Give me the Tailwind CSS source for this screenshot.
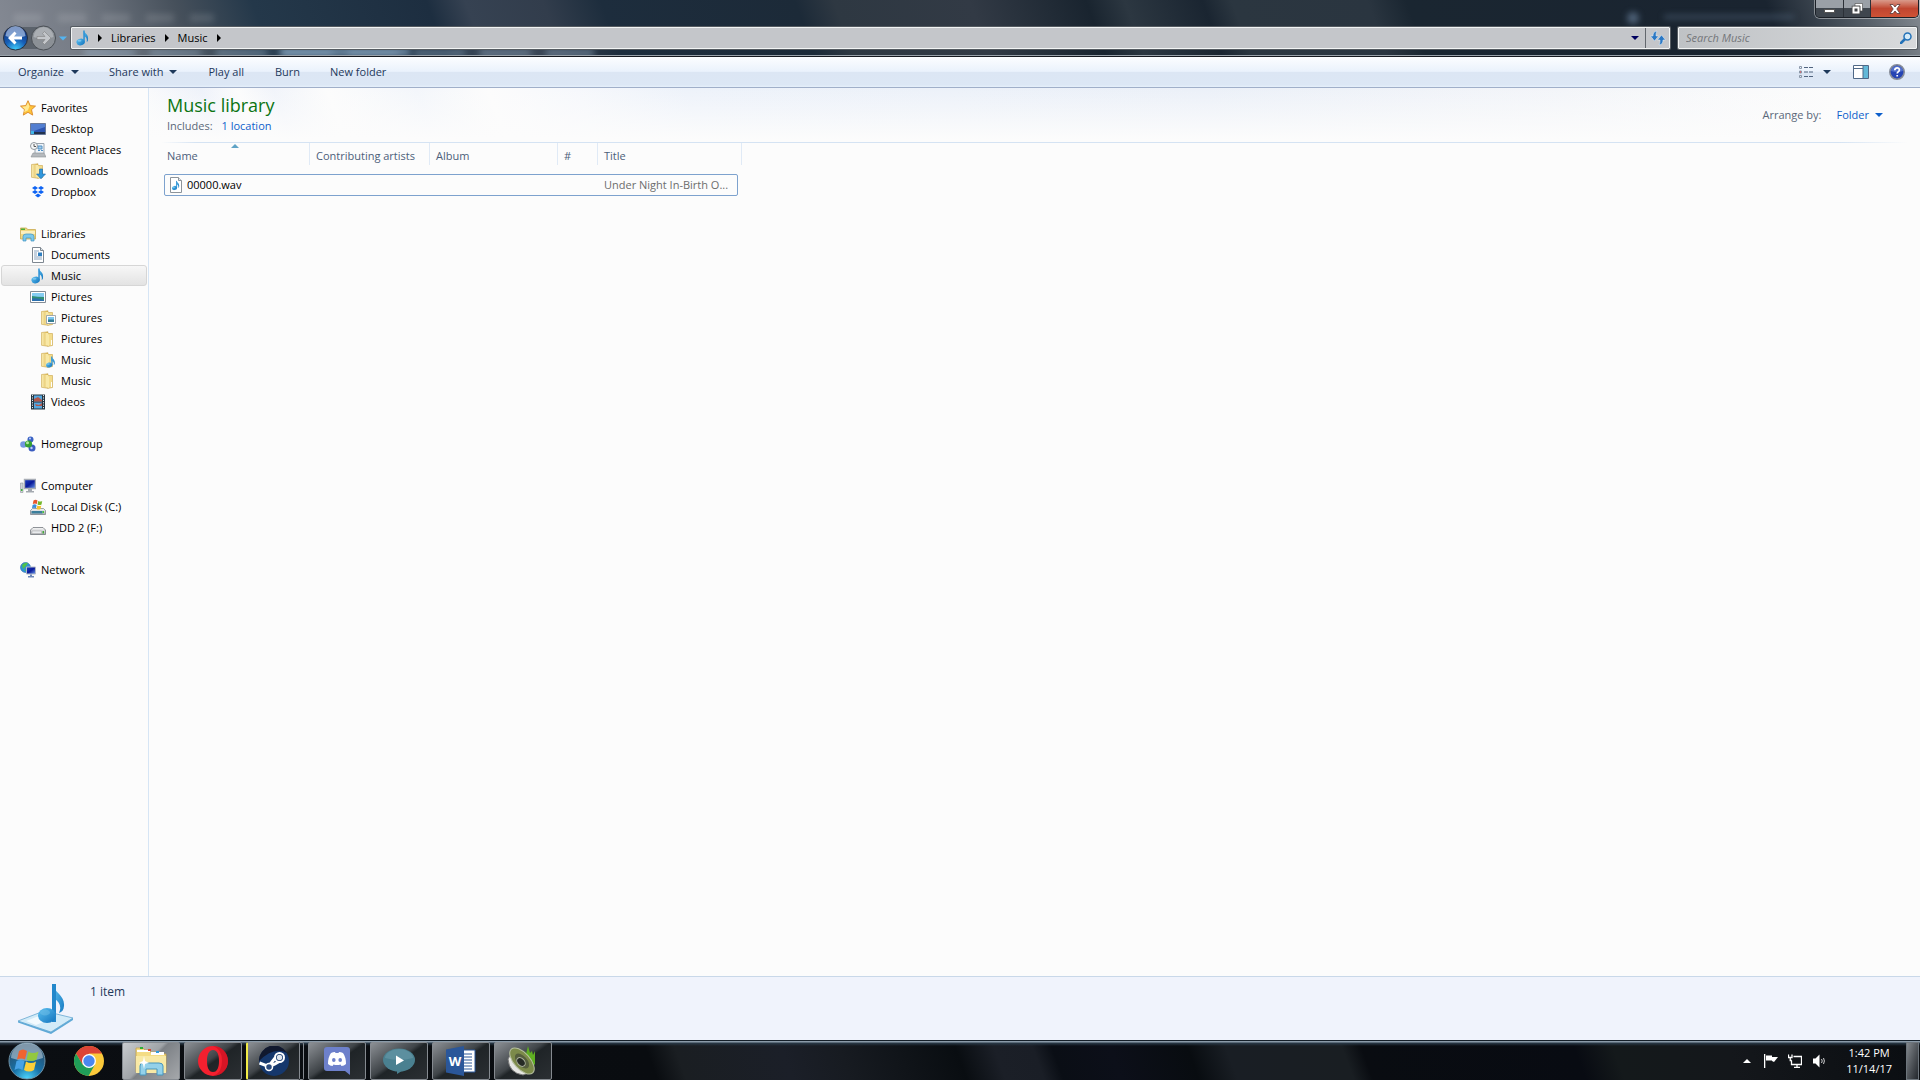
<!DOCTYPE html>
<html lang="en">
<head>
    <meta charset="UTF-8">
    <meta name="viewport" content="width=device-width, initial-scale=1.0">
    <title>Music</title>
    <script src="https://cdn.jsdelivr.net/npm/@tailwindcss/browser@4"></script>
</head>
<body class="h-screen flex flex-col overflow-hidden bg-[#fcfcfc] font-['Open_Sans',sans-serif] text-[11px] leading-4 text-black">
    <!-- shared icons -->
    <svg class="absolute size-0" aria-hidden="true">
        <defs>
            <linearGradient id="blue" x1="0" y1="0" x2="1" y2="1"><stop offset="0" stop-color="#5cc0f0"/><stop offset="1" stop-color="#1173bd"/></linearGradient>
            <linearGradient id="gold" x1="0" y1="0" x2="1" y2="0"><stop offset="0" stop-color="#fbeeb4"/><stop offset="1" stop-color="#dcb650"/></linearGradient>
            <linearGradient id="screen" x1="0" y1="0" x2="1" y2="1"><stop offset="0" stop-color="#1c3fc4"/><stop offset=".5" stop-color="#0a1a9a"/><stop offset="1" stop-color="#6fa0f0"/></linearGradient>
            <linearGradient id="metal" x1="0" y1="0" x2="0" y2="1"><stop offset="0" stop-color="#fafafa"/><stop offset="1" stop-color="#a9adb2"/></linearGradient>
        </defs>
        <symbol id="note" viewBox="0 0 16 16">
            <path d="M8.500.500c.5 2.500 5.500 3.500 4.500 9.500-.1.900-.7 1.700-1.300 2 .6-3-.5-4.800-2-5.500v6z" fill="url(#blue)"/>
            <path d="M8.300.500h1.400v12H8.300z" fill="#2a8fd4"/>
            <ellipse cx="5.600" cy="12" rx="4.200" ry="3.300" transform="rotate(-12 5.600 12)" fill="url(#blue)"/>
            <ellipse cx="4.500" cy="10.800" rx="2" ry="1" fill="#9fd8f5" opacity=".6"/>
        </symbol>
        <symbol id="folder" viewBox="0 0 16 16">
            <path d="M1.500 1.500 8 .800v14.500l-6.500-1z" fill="url(#gold)" stroke="#c9a448" stroke-width=".6"/>
            <path d="M8 2.500h4.500v12L8 15.300z" fill="#f3dc8b" stroke="#c9a448" stroke-width=".6"/>
            <path d="M5.500 2h2.500l1 2v11l-3.500-.7z" fill="#f8e8a6"/>
            <path d="M11 9h1v5h-1z" fill="#fff"/>
        </symbol>
        <symbol id="caret" viewBox="0 0 8 4"><path d="M0 0h8L4 4z" fill="currentColor"/></symbol>
        <symbol id="crumb" viewBox="0 0 4 8"><path d="M0 0v8l4-4z" fill="currentColor"/></symbol>
    </svg>

    <!-- title bar and address bar -->
    <header class="relative h-[57px] shrink-0 overflow-hidden border-b border-[#15181f] bg-[linear-gradient(70deg,#858a94_0%,#747a84_5%,#46505b_10%,#24384a_14%,#1d2e40_23%,#364252_25%,#323d4c_29%,#1d2d3d_32%,#1c2a38_42%,#2e3842_44%,#323a45_51%,#19242f_57%,#2c3741_59%,#1a2531_63%,#2b3640_64.5%,#2a3540_71.5%,#1a2631_73.500%,#1a2430_92%,#58616a_97%,#858b92_100%)]">
        <!-- window behind the glass -->
        <div class="absolute inset-0 blur-[3px]" aria-hidden="true">
            <div class="absolute left-[14px] top-[14px] h-2 w-[200px] bg-[repeating-linear-gradient(90deg,#ffffff20_0_28px,transparent_28px_44px)]"></div>
            <div class="absolute left-[84px] top-[49px] h-2 w-[510px] bg-[repeating-linear-gradient(90deg,#a9c4dc66_0_48px,#a9c4dc11_54px_66px)]"></div>
            <div class="absolute left-[280px] top-[48px] h-2 w-[130px] bg-[#9fc0de]/60"></div>
            <div class="absolute left-[1627px] top-[12px] size-3 rounded-full bg-[#6f89a5]/60"></div>
            <div class="absolute left-[1664px] top-[15px] h-1 w-[130px] bg-[#5d7389]/50"></div>
        </div>
        <div class="relative flex h-[26px] items-start justify-end pr-px">
            <div class="flex h-[18px] overflow-hidden rounded-b-[5px] border border-t-0 border-[#1b2027] shadow-[0_0_0_1px_#ffffff66]">
                <button class="flex w-7 items-end justify-center border-r border-[#2b3037] bg-linear-to-b from-[#9aa0a7] from-45% to-[#3f464e] to-50% pb-1" aria-label="Minimize"><span class="h-1 w-[11px] border border-[#555] bg-white"></span></button>
                <button class="flex w-[27px] items-center justify-center border-r border-[#2b3037] bg-linear-to-b from-[#9aa0a7] from-45% to-[#3f464e] to-50%" aria-label="Restore">
                    <svg class="size-3" viewBox="0 0 12 12" fill="none"><path d="M4 .500h7.500V8H9V3H4z" fill="#fff" stroke="#444" stroke-width=".6"/><path d="M2.500 4.500h5v5h-5z" stroke="#444" stroke-width="3.500"/><path d="M2.500 4.500h5v5h-5z" stroke="#fff" stroke-width="2"/></svg>
                </button>
                <button class="flex w-[47px] items-center justify-center bg-linear-to-b from-[#d99a8b] via-[#c04630] via-50% to-[#cf5235]" aria-label="Close">
                    <svg class="h-[10px] w-3" viewBox="0 0 12 10"><path d="m1 .500h3l2 2.500 2-2.500h3L7.800 5 11 9.500H8L6 7 4 9.500H1L4.200 5z" fill="#fff" stroke="#5a3a3a" stroke-width=".8"/></svg>
                </button>
            </div>
        </div>
        <div class="relative flex h-6 items-center gap-[3px] pl-[3px] pr-[2px]">
            <nav class="flex shrink-0 items-center" aria-label="History">
                <svg class="h-[26px] w-14" viewBox="0 0 56 26">
                    <defs>
                        <radialGradient id="back" cx=".5" cy="1" r=".9"><stop offset="0" stop-color="#42d2ff"/><stop offset=".5" stop-color="#1760b8"/><stop offset="1" stop-color="#15347e"/></radialGradient>
                    </defs>
                    <path d="M12 2h32v22H12z" fill="#5b626b"/>
                    <circle cx="12.500" cy="13" r="12" fill="url(#back)" stroke="#27303d"/>
                    <path d="M2.500 11a10 10 0 0 1 20 0q-10 4-20 0z" fill="#b8cfee" opacity=".65"/>
                    <path d="m5 13 6.500-6.500 2 2-2.500 3h8v3h-8l2.500 3-2 2z" fill="#fff"/>
                    <circle cx="40.500" cy="13" r="12" fill="#8b9096" stroke="#4a4f55"/>
                    <path d="M30.500 12a10 10 0 0 1 20 0q-10 4-20 0z" fill="#c9ccd0" opacity=".5"/>
                    <path d="m48 13-6.500-6.500-2 2 2.500 3h-8v3h8l-2.500 3 2 2z" fill="#c3c6ca" stroke="#777" stroke-width=".5"/>
                </svg>
                <button class="text-[#55b4f0]" aria-label="Recent pages"><svg class="h-[5px] w-2"><use href="#caret"/></svg></button>
            </nav>
            <div class="flex h-6 flex-1 items-center rounded-xs border-2 border-[#555b61] bg-[#c4c6ca] outline-1 -outline-offset-2 outline-[#f2f4f4]">
                <svg class="ml-[3px] size-4"><use href="#note"/></svg>
                <div class="flex flex-1 items-center gap-[9px] pl-[7px]">
                    <svg class="h-2 w-1"><use href="#crumb"/></svg>
                    <a href="#">Libraries</a>
                    <svg class="h-2 w-1"><use href="#crumb"/></svg>
                    <a href="#">Music</a>
                    <svg class="h-2 w-1"><use href="#crumb"/></svg>
                </div>
                <button class="px-[6px] text-[#000060]" aria-label="Previous locations"><svg class="h-1 w-2"><use href="#caret"/></svg></button>
                <button class="flex h-5 w-6 items-center justify-center border-l border-[#62676d]" aria-label="Refresh">
                    <svg class="size-4" viewBox="0 0 16 16" fill="#2b78c4" stroke="#e8f2fb" stroke-width=".5"><path d="M7 1C4 1.500 3 3 3 6H.500l4 5 4-5H6c0-2 0-3 1-5z"/><path d="M9 15c3-.5 4-2 4-5h2.500l-4-5-4 5H10c0 2 0 3-1 5z"/></svg>
                </button>
            </div>
            <div class="ml-[3px] flex h-6 w-[241px] items-center rounded-xs border-2 border-[#555b61] bg-linear-to-r from-[#bfc2c5] to-[#d8dadc] pl-[7px] pr-1 outline-1 -outline-offset-2 outline-[#f2f4f4]">
                <input type="text" class="w-full flex-1 bg-transparent italic outline-none placeholder:text-[#74767a]" placeholder="Search Music" aria-label="Search Music">
                <svg class="size-3" viewBox="0 0 12 12" fill="none" stroke="#2472b8"><path d="m1 11 4-4" stroke-width="2.500" stroke-linecap="round"/><circle cx="7.500" cy="4.500" r="3.500" stroke-width="1.500" fill="#d5ebf8"/></svg>
            </div>
        </div>
        <div class="absolute inset-x-0 bottom-0 h-px bg-[#9aa2aa]"></div>
    </header>

    <!-- command bar -->
    <div class="flex h-[31px] shrink-0 items-center border-b border-[#a0afc9] bg-[linear-gradient(#fcfdff,#eaf2fc_48%,#dce6f4_50%,#dce7f5_92%,#e5effa)] pl-[18px] pr-[15px] text-[#1e395b]">
        <button class="mr-[30px] flex items-center gap-[7px]">Organize <svg class="h-1 w-2"><use href="#caret"/></svg></button>
        <button class="mr-[31px] flex items-center gap-[6px]">Share with <svg class="h-1 w-2"><use href="#caret"/></svg></button>
        <button class="mr-[31px]">Play all</button>
        <button class="mr-[30px]">Burn</button>
        <button>New folder</button>
        <div class="ml-auto flex items-center">
            <button aria-label="Change your view">
                <svg class="block h-[14px] w-4" viewBox="0 0 16 14" fill="none"><path d="M1.500 1.500h2v2h-2zM1.500 6h2v2h-2zM1.500 10.500h2v2h-2z" stroke="#8a97a8"/><path d="M2 6.500h1v1H2z" fill="#d22"/><path d="M6 2.500h10M6 7h10M6 11.500h10" stroke="#51647f" stroke-dasharray="4 1"/></svg>
            </button>
            <button class="ml-[9px]" aria-label="More options"><svg class="h-1 w-2"><use href="#caret"/></svg></button>
            <button class="ml-[22px]" aria-label="Show the preview pane">
                <svg class="block h-[14px] w-4" viewBox="0 0 16 14"><path d="M.500.500h15v13H.500z" fill="#fff" stroke="#4f6887"/><path d="M10 1h5v12h-5z" fill="#62b8d8"/><path d="M1 3.500h9M10 1v12" stroke="#4f6887"/></svg>
            </button>
            <button class="ml-5" aria-label="Get help">
                <svg class="block size-4" viewBox="0 0 16 16"><circle cx="8" cy="8" r="7.200" fill="#2544b4" stroke="#868c98" stroke-width="1.600"/><path d="M2 7a6 5 0 0 1 12 0q-6 2-12 0z" fill="#7f9be6" opacity=".5"/><path d="M5.800 6.200c0-3.200 4.700-3 4.600-.2 0 1.700-2.200 1.600-2.200 3.600M8.200 11v1.600" fill="none" stroke="#fff" stroke-width="1.700"/></svg>
            </button>
        </div>
    </div>

    <div class="flex min-h-0 flex-1">
        <!-- navigation pane -->
        <nav class="w-[149px] shrink-0 border-r border-[#d6e5f5] pt-[9px] [&_a]:mx-px [&_a]:flex [&_a]:h-[21px] [&_a]:items-center [&_a]:gap-[5px] [&_svg]:size-4 [&_svg]:shrink-0" aria-label="Folders">
            <ul class="mb-[21px]">
                <li><a href="#" class="pl-[19px]"><svg viewBox="0 0 16 16"><path d="m8 .700 2.200 4.900 5.300.500-4 3.600 1.200 5.400L8 12.300l-4.700 2.800 1.200-5.400-4-3.600 5.300-.5z" fill="#ffc53a" stroke="#d98728" stroke-width=".9"/><path d="m8 2.500 1.500 3.800-1.500 4-4 2 1-3-3-2.500 4-.5z" fill="#ffe993"/></svg>Favorites</a></li>
                <li><a href="#" class="pl-[29px]"><svg viewBox="0 0 16 16"><path d="M.500 2.500h15v11H.500z" fill="#2c54b0" stroke="#6a7a98"/><path d="M1 3h14v3L1 11z" fill="#6c9be6" opacity=".6"/><path d="M1 11h14v2H1z" fill="#22324e"/><path d="M1 10h3v3H1z" fill="#3fb5e8"/></svg>Desktop</a></li>
                <li><a href="#" class="pl-[29px]"><svg viewBox="0 0 16 16"><path d="M5 1.500h9v10H5z" fill="#eef4fa" stroke="#9aa4ae"/><path d="M8 4h4v3H8zM8 8.500h2M11 8.500h2" stroke="#5090c4" fill="#a4cdea"/><path d="m3 11h11l2 4H1z" fill="#b5b9bd" stroke="#8b9095" stroke-width=".6"/><circle cx="4" cy="4" r="3.500" fill="#f5f7f8" stroke="#92999f"/><path d="M4 2v2.500h2" fill="none" stroke="#555"/></svg>Recent Places</a></li>
                <li><a href="#" class="pl-[29px]"><svg viewBox="0 0 16 16"><use href="#folder"/><path d="M9.500 6h3v5h3L11 15.800 6.500 11h3z" fill="#2f97dd" stroke="#1766a8" stroke-width=".6"/></svg>Downloads</a></li>
                <li><a href="#" class="pl-[29px]"><svg viewBox="0 0 16 16" fill="#0d63f3"><path d="m5 2 3 2-3 2-3-2zM11 2l3 2-3 2-3-2zM5 6l3 2-3 2-3-2zM11 6l3 2-3 2-3-2zM8 9.500l3 2-3 2-3-2z"/></svg>Dropbox</a></li>
            </ul>
            <ul class="mb-[21px]">
                <li><a href="#" class="pl-[19px]"><svg viewBox="0 0 16 16"><path d="M.500 2h6l1 1.500h8V13H.500z" fill="#f2d983" stroke="#c9a94f" stroke-width=".8"/><path d="M1 2.500h4V4H1z" fill="#4cad3a"/><path d="M1 5h14v3H1z" fill="#fbefbd"/><path d="M3 15V10.500Q3 8 6 8h5q3 0 3 2.500V15h-3v-3H6v3z" fill="#7cc8ea" stroke="#3f94c2" stroke-width=".7"/></svg>Libraries</a></li>
                <li><a href="#" class="pl-[29px]"><svg viewBox="0 0 16 16"><path d="M2.500.500h8l3 3v12h-11z" fill="#fff" stroke="#7e8790"/><path d="M10.500.500v3h3" fill="#dde3e8" stroke="#7e8790"/><path d="M4 4h5M4 6h3M4 8h3M4 10h8M4 12h8" stroke="#8aa3bd"/><path d="M8 5.500h4V9H8z" fill="#2f7fc0"/></svg>Documents</a></li>
                <li><a href="#" aria-current="page" class="rounded-[3px] border border-[#d6d6d6] bg-linear-to-b from-[#f7f7f7] to-[#e3e3e3] pl-7"><svg><use href="#note"/></svg>Music</a></li>
                <li><a href="#" class="pl-[29px]"><svg viewBox="0 0 16 16"><path d="M.500 2.500h15v11H.500z" fill="#fff" stroke="#828c96"/><path d="M2 4h12v5H2z" fill="#85cdf2"/><path d="M2 7q5 1 12 1v4H2z" fill="#2f8f76"/><path d="M2 9.500q6-1 12 1.500v1H2z" fill="#2a6fae"/></svg>Pictures</a></li>
                <li><a href="#" class="pl-[39px]"><svg viewBox="0 0 16 16"><use href="#folder"/><path d="M6.500 5.500h9v8h-9z" fill="#fff" stroke="#8c969f" stroke-width=".8"/><path d="M8 7h6v3H8z" fill="#7cc5ee"/><path d="M8 9.500h6V12H8z" fill="#357d95"/></svg>Pictures</a></li>
                <li><a href="#" class="pl-[39px]"><svg><use href="#folder"/></svg>Pictures</a></li>
                <li><a href="#" class="pl-[39px]"><svg viewBox="0 0 16 16"><use href="#folder"/><use href="#note" x="5" y="4" width="12" height="12"/></svg>Music</a></li>
                <li><a href="#" class="pl-[39px]"><svg><use href="#folder"/></svg>Music</a></li>
                <li><a href="#" class="pl-[29px]"><svg viewBox="0 0 16 16"><path d="M1 .500h14v15H1z" fill="#26343f"/><path d="M4 1.500h8v6H4zM4 8.500h8v6H4z" fill="#56a8e0"/><path d="m4 5 4-2 4 3v1.500H4zM5 10l4 1 3-2v3H6z" fill="#b3574a"/><path d="M2.500 1v14M13.500 1v14" stroke="#dfe8ee" stroke-dasharray="1.200 1.200"/></svg>Videos</a></li>
            </ul>
            <ul class="mb-[21px]">
                <li><a href="#" class="pl-[19px]"><svg viewBox="0 0 16 16"><circle cx="10.500" cy="3.500" r="3" fill="#3a62c4"/><circle cx="3.500" cy="8.500" r="3.300" fill="#7395e0"/><circle cx="12" cy="12" r="3.500" fill="#3a5cc0"/><circle cx="8.500" cy="8" r="3.600" fill="#35a033"/><circle cx="7.500" cy="6.800" r="1.500" fill="#b2e8a0"/><circle cx="10" cy="2.500" r="1" fill="#c2d4fa"/><circle cx="11.500" cy="12" r="1.200" fill="#b9cdf8"/></svg>Homegroup</a></li>
            </ul>
            <ul class="mb-[21px]">
                <li><a href="#" class="pl-[19px]"><svg viewBox="0 0 16 16"><path d="M4.500 1.500h11v9h-11z" fill="url(#screen)" stroke="#a7acb5" stroke-width="1.400"/><path d="M8 11h4v2h2v1.500H6V13h2z" fill="#a4a9b0"/><path d="M.500 5h2.500v9.500H.500z" fill="#cfd3d8" stroke="#8f959c" stroke-width=".6"/><path d="M1 11h1.500v2H1z" fill="#3db53a"/></svg>Computer</a></li>
                <li><a href="#" class="pl-[29px]"><svg viewBox="0 0 16 16"><path d="m2.500 9.500h11l2 2v4H.500v-4z" fill="url(#metal)" stroke="#777d84" stroke-width=".7"/><path d="M1.500 12h11v2.500h-11z" fill="#3c7f9c"/><path d="M12.500 12H14v2h-1.500z" fill="#47c43b"/><path d="M3.500 1.500q2-1.500 4 0l-.7 3.500q-2-1-4 0z" fill="#e8562c"/><path d="M8.200 2q2 1 4 0l-.7 3.500q-2 1-4 0z" fill="#74b72b"/><path d="M2.600 6q2-1.500 4 0L6 9.300q-2-1-4 0z" fill="#3b8fdc"/><path d="M7.300 6.500q2 1 4 0L10.500 10q-2 1-4 0z" fill="#f8c22d"/></svg>Local Disk (C:)</a></li>
                <li><a href="#" class="pl-[29px]"><svg viewBox="0 0 16 16"><path d="M3 7.500h10l2.500 2.500v4.500H.500V10z" fill="url(#metal)" stroke="#74797f" stroke-width=".8"/><path d="M2 11h9.500v2.500H2z" fill="#e9ebee" stroke="#999" stroke-width=".4"/><path d="M12.500 11H14v2.500h-1.500z" fill="#47a93b"/></svg>HDD 2 (F:)</a></li>
            </ul>
            <ul>
                <li><a href="#" class="pl-[19px]"><svg viewBox="0 0 16 16"><circle cx="5.500" cy="5.500" r="5" fill="#2f90d8" stroke="#2a6ba6" stroke-width=".6"/><path d="M2 3q3-3 6-2L6 4 3 7zM4 8l3-1 1 3z" fill="#4fc24c"/><path d="M6.500 5h9v7h-9z" fill="url(#screen)" stroke="#b3bac6"/><path d="M10 12.500h2V14h2v1.500H8V14h2z" fill="#6c87b8"/></svg>Network</a></li>
            </ul>
        </nav>

        <!-- library contents -->
        <main class="min-w-0 flex-1 pl-3">
            <div class="-ml-3 flex h-[54px] justify-between bg-[linear-gradient(#fcfcfc00,#fcfcfc_95%),linear-gradient(70deg,#fcfcfc_0%,#eef2fa_4%,#fcfcfc_6%,#f1f4fa_8%,#fcfcfc_11%,#f3f6fb_16%,#fcfcfc_20%,#f6f8fc_25%,#edf2fa_31%,#ebf0f8_60%,#f3f5f9_80%,#fcfcfc_95%)] pl-[18px] pr-[37px]">
                <div class="pt-[5px]">
                    <h1 class="mb-px text-[18px] leading-6 text-[#0b7412]">Music library</h1>
                    <p class="text-[#5a6779]">Includes: <a href="#" class="ml-[6px] text-[#0d5fcb]">1 location</a></p>
                </div>
                <div class="flex items-center gap-[15px] text-[#5a6779]">
                    <span>Arrange by:</span>
                    <button class="flex items-center gap-[6px] text-[#0d5fcb]">Folder <svg class="h-1 w-2"><use href="#caret"/></svg></button>
                </div>
            </div>
            <div class="mr-3 h-px bg-[linear-gradient(90deg,#fcfcfc,#d5e3f3_2%,#d5e3f3_96%,#fcfcfc)]"></div>
            <table class="ml-[3px] w-[578px] table-fixed border-collapse text-left [&_th]:p-0 [&_th]:font-normal [&_th]:text-[#4c607a]">
                <thead>
                    <tr>
                        <th class="relative w-[146px]">
                            <svg class="absolute left-[67px] top-px h-1 w-2" viewBox="0 0 8 4"><path d="m0 4 4-4 4 4z" fill="#5fa3c6"/></svg>
                            <div class="border-r border-[#e0eaf6] pt-[5px] pb-px pl-[3px]">Name</div>
                        </th>
                        <th class="w-[120px]"><div class="border-r border-[#e0eaf6] pt-[5px] pb-px pl-[6px]">Contributing artists</div></th>
                        <th class="w-[128px]"><div class="border-r border-[#e0eaf6] pt-[5px] pb-px pl-[6px]">Album</div></th>
                        <th class="w-10"><div class="border-r border-[#e0eaf6] pt-[5px] pb-px pl-[6px]">#</div></th>
                        <th class="w-[144px]"><div class="border-r border-[#e0eaf6] pt-[5px] pb-px pl-[6px]">Title</div></th>
                    </tr>
                    <tr class="h-[9px]"></tr>
                </thead>
                <tbody>
                    <tr class="h-[22px]">
                        <!-- focus frame spans the whole row -->
                        <td class="relative p-0 pl-1 after:absolute after:inset-y-0 after:left-0 after:w-[574px] after:rounded-xs after:border after:border-[#7da2ce]">
                            <div class="flex items-center gap-[3px]">
                                <svg class="size-4" viewBox="0 0 16 16"><path d="M2.500.500h8l3 3v12h-11z" fill="#fff" stroke="#8d949b"/><path d="M10.500.500v3h3" fill="#e4e8ec" stroke="#8d949b"/><use href="#note" x="3" y="3.500" width="10" height="10"/></svg>
                                00000.wav
                            </div>
                        </td>
                        <td></td>
                        <td></td>
                        <td></td>
                        <td class="p-0 pl-[6px] whitespace-nowrap text-[#6d6d6d]">Under Night In-Birth O...</td>
                    </tr>
                </tbody>
            </table>
        </main>
    </div>

    <!-- details pane -->
    <section class="flex h-16 shrink-0 gap-4 border-t border-[#c9d8e9] bg-[#f0f3fc] pl-[18px] pt-[7px] text-[12px] text-[#1e395b]" aria-label="Details">
        <svg class="h-[50px] w-14 shrink-0" viewBox="0 0 56 50">
            <path d="m0 37 26-10 29 7-22 14z" fill="#d2ebf8" stroke="#7fb6d9"/>
            <path d="m0 37 33 11 22-14v2L33 50 0 38.500z" fill="#5fa9d6"/>
            <path d="m8 37 18-7 12 3-20 8z" fill="#f2fafe"/>
            <path d="M35 0c1 9 12 11 11 22-.3 4-2 6-5 7 3-7 0-11-4-14v22h-2z" fill="url(#blue)"/>
            <path d="M34 0h4v38h-4z" fill="#2287cb"/>
            <ellipse cx="29" cy="31.500" rx="9" ry="7.500" fill="url(#blue)"/>
            <ellipse cx="27" cy="28.500" rx="5" ry="3" fill="#72bfe8" opacity=".5"/>
        </svg>
        <p>1 item</p>
    </section>

    <!-- taskbar -->
    <footer class="flex h-10 shrink-0 items-stretch border-t border-[#15202a] bg-[linear-gradient(#8a9aa8_0_1px,#2a3a48_2px,#ffffff00_5px),linear-gradient(70deg,#0b0e12_0%,#090c10_34%,#1a1e22_35.500%,#1b1f28_41%,#171b21_44%,#090d11_50%,#1b1f27_52%,#1a1e26_54%,#0a0e15_55%,#0c0f19_58%,#080c10_62%,#191e24_64%,#191e22_70%,#090c11_71%,#080b12_82%,#14191b_84%,#14171b_90%,#0a0d11_100%)] text-white">
        <button class="ml-2 mr-[26px] w-[38px]" aria-label="Start">
            <svg class="block h-[38px] w-[38px]" viewBox="0 0 38 38">
                <defs>
                    <radialGradient id="orb" cx=".5" cy="1" r=".9"><stop offset="0" stop-color="#4fd8ff"/><stop offset=".45" stop-color="#1872a8"/><stop offset="1" stop-color="#294d6b"/></radialGradient>
                </defs>
                <circle cx="19" cy="19" r="18" fill="url(#orb)" stroke="#6f93a8"/>
                <path d="M3 16a16 15 0 0 1 32 0q-16 6-32 0z" fill="#d5e4ec" opacity=".5"/>
                <path d="M11 9q4-3 8 0l-2 8.500q-4-2-8 0z" fill="#ef6430"/>
                <path d="M20.500 9.500q4 3 10 0l-2 8q-5 3-10 0z" fill="#93c83e"/>
                <path d="M8.500 19q4-2 8 0l-2 9q-4-3-8 0z" fill="#47a2e6"/>
                <path d="M18 19.500q5 3 10 0l-2 8.500q-5 3-10 0z" fill="#fccf39"/>
            </svg>
        </button>
        <button class="mr-4 flex w-[34px] items-center justify-center" aria-label="Google Chrome">
            <svg class="size-[30px]" viewBox="0 0 30 30"><circle cx="15" cy="15" r="15" fill="#fbc93a"/><path d="M2 7.500A15 15 0 0 1 28 7.500H15l-6.500 11z" fill="#dc4437"/><path d="M2 7.500A15 15 0 0 0 14.500 30l6.500-11.500H8.500z" fill="#1f9d58"/><circle cx="15" cy="15" r="7" fill="#fff"/><circle cx="15" cy="15" r="5.700" fill="#4a87f1"/></svg>
        </button>
        <div class="flex gap-1 pt-px [&>button]:flex [&>button]:h-[38px] [&>button]:w-[58px] [&>button]:items-center [&>button]:justify-center [&>button]:rounded-xs [&>button]:border [&>button]:border-[#858a90]">
            <button class="bg-[linear-gradient(135deg,#c9cccf,#a0a4a8_45%,#7d8186_50%,#a5a8ab)]" aria-label="Windows Explorer">
                <svg class="h-[30px] w-8" viewBox="0 0 32 30"><path d="M1 2h7l2 2h4l1 2h7l1 2h8v18H1z" fill="#f4dc84" stroke="#c4a149" stroke-width=".8"/><path d="M2 4h13v2H2zM16 6h13v3H16z" fill="#fff"/><path d="M5 1h3v2H5z" fill="#2cae38"/><path d="M13 3h3v2h-3z" fill="#d84630"/><path d="M21 5h3v2h-3z" fill="#2f9bdb"/><path d="M1 10h30v17H1z" fill="#f8e9a5"/><path d="M5 29V20q0-3 3-3h16q4 0 4 3v9h-6v-6H11v6z" fill="#93d1ea" stroke="#4796bd"/><path d="m9 10 1 5 4 2-4 1-1 5-1-5-4-1 4-2z" fill="#fff"/></svg>
            </button>
            <button class="bg-[linear-gradient(145deg,#8c9095,#3f4448_45%,#1f2427_52%,#2b2f33)]" aria-label="Opera">
                <svg class="size-[30px]" viewBox="0 0 30 30"><path fill-rule="evenodd" d="M15 0a15 15 0 1 0 0 30 15 15 0 0 0 0-30zm0 4c4.500 0 6 5 6 11s-1.500 11-6 11-6-5-6-11 1.500-11 6-11z" fill="#f3202f"/><path d="M15 0q14 1 15 15-1 14-15 15 9-3 9-15T15 0z" fill="#b90a1c" opacity=".5"/></svg>
            </button>
            <div class="flex h-[38px] w-[58px]">
                <button class="flex w-[54px] items-center justify-center rounded-xs border border-l-2 border-[#858a90] border-l-[#f2ec46] bg-[linear-gradient(145deg,#8c9095,#3f4448_45%,#1f2427_52%,#2b2f33)]" aria-label="Steam">
                    <svg class="size-[30px]" viewBox="0 0 30 30"><circle cx="15" cy="15" r="15" fill="#15376c"/><path d="M0 15a15 15 0 0 1 28-8Q15 0 0 15z" fill="#10182e"/><path d="m.500 17 9 3.500 7-9M9 21l7-3 5-3" stroke="#fff" stroke-width="3" fill="none"/><circle cx="20.500" cy="11.500" r="4.500" fill="#15376c" stroke="#fff" stroke-width="2"/><circle cx="20.500" cy="11.500" r="2.700" fill="#dfe6ee"/><circle cx="10" cy="21" r="3.500" fill="#2a4a7d" stroke="#fff" stroke-width="1.500"/></svg>
                </button>
                <div class="w-1 rounded-r-xs border border-l-0 border-[#858a90]"></div>
            </div>
            <button class="bg-[linear-gradient(145deg,#8c9095,#3f4448_45%,#1f2427_52%,#2b2f33)]" aria-label="Discord">
                <svg class="h-7 w-[26px]" viewBox="0 0 26 28"><path d="M3 0h20q3 0 3 3v25l-5-4H3q-3 0-3-3V3q0-3 3-3z" fill="#6d80cb"/><path d="M4 17q0-7 3-11 2-1 4-1l.5 1h3l.5-1q2 0 4 1 3 4 3 11-2 2-4.500 2l-1-1.500q-3.500 1-7 0L8.500 19Q6 19 4 17z" fill="#fff"/><ellipse cx="9.800" cy="13" rx="1.800" ry="2" fill="#6d80cb"/><ellipse cx="16.200" cy="13" rx="1.800" ry="2" fill="#6d80cb"/></svg>
            </button>
            <button class="bg-[linear-gradient(145deg,#8c9095,#3f4448_45%,#1f2427_52%,#2b2f33)]" aria-label="Media player">
                <svg class="h-[26px] w-8" viewBox="0 0 32 26"><ellipse cx="16" cy="12" rx="16" ry="11.500" fill="#4a8090"/><path d="M14 22v4l8-5z" fill="#4a8090"/><path d="M2 10a14 9 0 0 1 28 0q-14 4-28 0z" fill="#6d9ead" opacity=".5"/><path d="m13 7.500 8 5-8 4.500z" fill="#fff"/></svg>
            </button>
            <button class="bg-[linear-gradient(145deg,#8c9095,#3f4448_45%,#1f2427_52%,#2b2f33)]" aria-label="Word">
                <svg class="h-[30px] w-[30px]" viewBox="0 0 30 30"><path d="M16 4h13v22H16z" fill="#fff" stroke="#2a5699"/><path d="M18 8h8M18 11h8M18 14h8M18 17h8M18 20h8M18 23h8" stroke="#2a5699"/><path d="M0 3.500 18 0v30L0 26.500z" fill="#2a5699"/><text x="9" y="20" text-anchor="middle" font-size="13" font-weight="700" fill="#fff">W</text></svg>
            </button>
            <button class="bg-[linear-gradient(145deg,#8c9095,#3f4448_45%,#1f2427_52%,#2b2f33)]" aria-label="Sound editor">
                <svg class="h-[30px] w-8" viewBox="0 0 32 30"><path d="m16 9 2-4 1 3 2-8 2 7 2-2 1 4 2-4v13l-6 8z" fill="#5fae22"/><path d="M1 13q1 14 15 16l8-3L4 8z" fill="#e5e6e3" stroke="#777"/><ellipse cx="15" cy="15" rx="8" ry="16" transform="rotate(-42 15 15)" fill="#7c8a4a" stroke="#b6bfa0"/><ellipse cx="15" cy="15" rx="5" ry="9" transform="rotate(-42 15 15)" fill="#555e3d"/><ellipse cx="14" cy="16" rx="3.500" ry="5" transform="rotate(-42 14 16)" fill="#262b25" stroke="#aab09d"/></svg>
            </button>
        </div>
        <div class="ml-auto flex items-center">
            <button class="mr-[13px]" aria-label="Show hidden icons"><svg class="h-1 w-2" viewBox="0 0 8 4"><path d="m0 4 4-4 4 4z" fill="#fff"/></svg></button>
            <button class="mr-[10px]" aria-label="Action Center"><svg class="h-[14px] w-[14px]" viewBox="0 0 14 14" fill="#fff"><path d="M0 0h1.300v14H0zM2 1.500h6v1.500h6l-2 2.500L10 8 8 7V6.500H2z"/></svg></button>
            <button class="mr-[11px]" aria-label="Network"><svg class="h-[14px] w-[14px]" viewBox="0 0 14 14" fill="none" stroke="#fff"><path d="M5.500 2.500h8v8h-10v-4M6 13.500h6M9 10.500v3M.500.500v3h3.500v-3M2.250 3.500v3h1.500" stroke-width="1.300"/></svg></button>
            <button class="mr-[21px]" aria-label="Volume"><svg class="h-[14px] w-3" viewBox="0 0 12 14"><path d="M0 4.500h2.500L6.500.500v13l-4-4H0z" fill="#fff"/><path d="M8.500 5q1.500 2 0 4M10.500 4q1.800 3 0 6" fill="none" stroke="#fff" stroke-width=".8"/></svg></button>
            <time class="mr-[14px] block text-center" datetime="2017-11-14T13:42">1:42 PM<br>11/14/17</time>
            <button class="mr-px h-[38px] w-[13px] border border-[#6d757c] bg-linear-to-br from-[#84898e] to-[#24282d]" aria-label="Show desktop"></button>
        </div>
    </footer>
</body>
</html>
